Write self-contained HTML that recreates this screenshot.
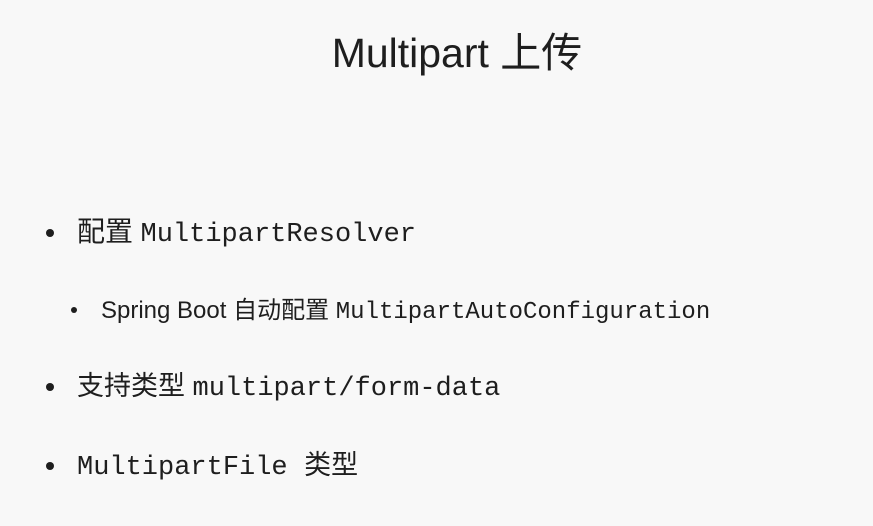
<!DOCTYPE html>
<html><head><meta charset="utf-8"><style>
html,body{margin:0;width:873px;height:526px;background:#f8f8f8;overflow:hidden;color:#1e1e1e}
.t{position:absolute;white-space:nowrap;line-height:1;font-family:"Liberation Sans","Noto Sans CJK SC",sans-serif}
.m{font-family:"Liberation Mono","Noto Sans CJK SC",monospace}
.c{font-family:"Noto Sans CJK SC",sans-serif}
.b{position:absolute;border-radius:50%;background:#1e1e1e}
</style></head><body>
<div class="t" style="left:0;width:914px;text-align:center;top:29px;font-size:41px">Multipart <span class="c">上传</span></div>

<div class="b" style="left:46px;top:229px;width:8px;height:8px"></div>
<div class="t" style="left:77px;top:216px;font-size:27px"><span class="c" style="font-size:28px">配置</span> <span class="m">MultipartResolver</span></div>

<div class="b" style="left:71px;top:307px;width:6px;height:6px"></div>
<div class="t" style="left:101px;top:296px;font-size:24px">Spring Boot <span class="c" style="font-size:24px">自动配置</span> <span class="m" style="font-size:24px">MultipartAutoConfiguration</span></div>

<div class="b" style="left:46px;top:383px;width:8px;height:8px"></div>
<div class="t" style="left:77px;top:370px;font-size:27px"><span class="c" style="font-size:27px">支持类型</span> <span class="m">multipart/form-data</span></div>

<div class="b" style="left:46px;top:462px;width:8px;height:8px"></div>
<div class="t" style="left:77px;top:449px;font-size:27px"><span class="m">MultipartFile</span>&nbsp;<span class="c" style="font-size:27px;margin-left:9px">类型</span></div>
</body></html>
